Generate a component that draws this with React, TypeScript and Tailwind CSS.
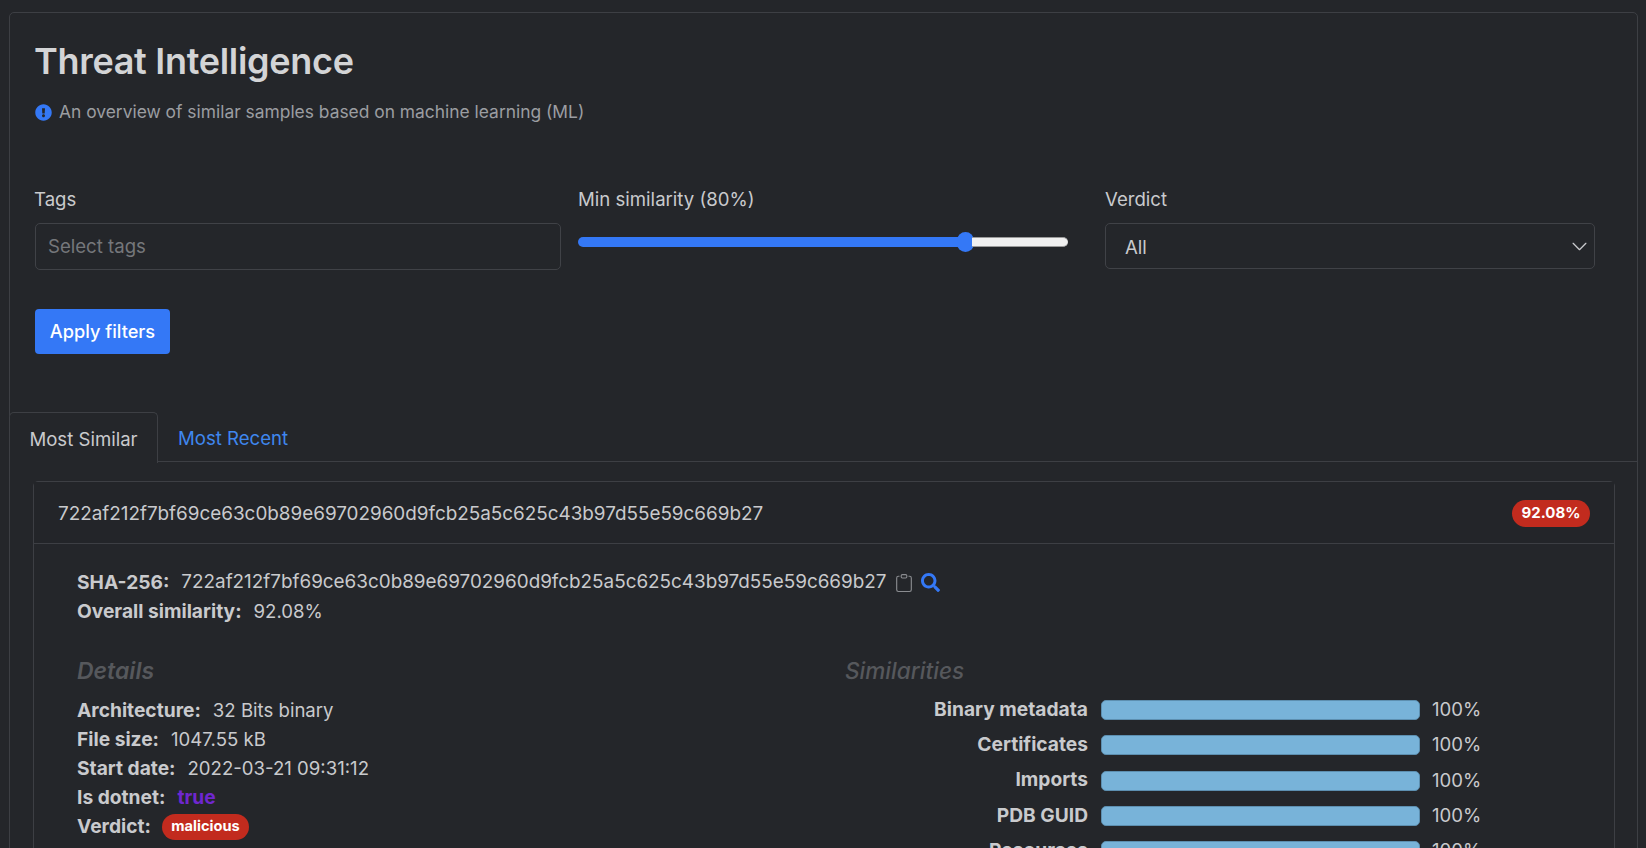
import { FaExclamationCircle, FaSearch } from 'react-icons/fa'
import { BsClipboard } from 'react-icons/bs'

const HASH = '722af212f7bf69ce63c0b89e69702960d9fcb25a5c625c43b97d55e59c669b27'

const similarities = ['Binary metadata', 'Certificates', 'Imports', 'PDB GUID', 'Resources']

const details = [
  { label: 'Architecture:', value: '32 Bits binary' },
  { label: 'File size:', value: '1047.55 kB' },
  { label: 'Start date:', value: '2022-03-21 09:31:12' },
]

const Field = ({ label, value }: { label: string; value: React.ReactNode }) => (
  <div className="flex h-[29px] items-center">
    <span className="text-[19.2px] font-bold">{label}</span>
    <span className="ml-[12px] flex items-center">{value}</span>
  </div>
)

const App = () => {
  return (
    <div className="h-[848px] overflow-hidden bg-[#24262a] pl-[9px] pr-[8px] pt-[12px] font-['Inter',sans-serif] text-[18.6px] text-[#c9cacd]">
      <div className="h-[900px] rounded-t-[5px] border border-[#3d3f44]">
        <div className="pl-[24px] pr-[25px] pt-[27px]">
          <h1 className="text-[36px] leading-[42px] font-semibold tracking-[-0.3px] text-[#d3d4d6]">Threat Intelligence</h1>
          <div className="mt-[18px] flex h-[25px] items-center text-[17.4px] text-[#9b9da1]">
            <FaExclamationCircle className="mr-[7px] ml-[1px] h-[17px] w-[17px] text-[#3478f6]" />
            An overview of similar samples based on machine learning (ML)
          </div>

          <div className="mt-[62px] flex">
            <div className="w-[527px]">
              <div className="h-[24px] leading-[24px]">Tags</div>
              <div className="mt-[12px] ml-[1px] flex h-[47px] items-center rounded-[5px] border border-[#404247] pl-[12px] pt-[1px] text-[#75777b]">
                Select tags
              </div>
            </div>
            <div className="ml-[17px] w-[490px]">
              <div className="h-[24px] leading-[24px]">Min similarity (80%)</div>
              <div className="mt-[21px] flex h-[20px] items-center">
                <div className="h-[10px] w-[381px] rounded-l-full bg-[#3478f6]" />
                <div className="-ml-[2px] h-[20px] w-[17px] shrink-0 rounded-full bg-[#3478f6]" />
                <div className="-ml-[2px] h-[10px] w-[96px] rounded-r-full border-y border-[#9a9a9a] bg-[#f0f0f0]" />
              </div>
            </div>
            <div className="ml-[37px] w-[490px]">
              <div className="h-[24px] leading-[24px]">Verdict</div>
              <div className="mt-[12px] flex h-[46px] items-center justify-between rounded-[5px] border border-[#404247] pl-[19px] pr-[6px]">
                <span className="pt-[3px]">All</span>
                <svg viewBox="0 0 16 16" className="h-[17px] w-[17px]" fill="none" stroke="#c9cacd" strokeWidth="1.2" strokeLinecap="round" strokeLinejoin="round">
                  <path d="m2 5 6 6 6-6" />
                </svg>
              </div>
            </div>
          </div>

          <button className="mt-[39px] ml-[1px] h-[45px] w-[135px] rounded-[4px] bg-[#3478f6] pt-[1px] text-center text-[18.2px] font-medium text-white">
            Apply filters
          </button>
        </div>

        <div className="mt-[58px] flex h-[50px] border-b border-[#3d3f44]">
          <div className="-ml-px flex h-[51px] w-[149px] items-center justify-center rounded-t-[5px] border border-b-0 border-[#3d3f44] bg-[#24262a] pt-[4px]">
            Most Similar
          </div>
          <div className="ml-[20px] flex items-center pt-[4px] text-[#3f87ee]">Most Recent</div>
        </div>

        <div className="ml-[23px] mr-[22px] mt-[19px] rounded-t-[5px] border border-[#3d3f44]">
          <div className="flex h-[62px] items-center justify-between border-b border-[#3d3f44] bg-[#232529] pl-[24px] pr-[24px]">
            <span className="pt-[3px] text-[18.87px]">{HASH}</span>
            <span className="mt-[1px] flex h-[27px] w-[78px] items-center justify-center rounded-full bg-[#c22b1e] text-[15px] font-bold text-white">
              92.08%
            </span>
          </div>
          <div className="pl-[43px] pr-[42px] pt-[24px]">
            <Field
              label="SHA-256:"
              value={
                <>
                  <span className="text-[18.87px]">{HASH}</span>
                  <BsClipboard className="ml-[8px] h-[18px] w-[18px] text-[#8a8c90]" />
                  <FaSearch className="ml-[8px] h-[19px] w-[19px] text-[#3478f6]" />
                </>
              }
            />
            <Field label="Overall similarity:" value="92.08%" />

            <div className="mt-[31px] grid grid-cols-[768px_1fr]">
              <div>
                <h2 className="h-[28px] text-[23px] leading-[28px] font-semibold text-[#56585c] italic">Details</h2>
                <div className="mt-[11px]">
                  {details.map((d) => (
                    <Field key={d.label} label={d.label} value={d.value} />
                  ))}
                  <Field label="Is dotnet:" value={<span className="text-[19.2px] font-bold text-[#6f27cf]">true</span>} />
                  <Field
                    label="Verdict:"
                    value={
                      <span className="-ml-[1px] flex h-[26px] w-[87px] items-center justify-center rounded-full bg-[#c22b1e] text-[14.6px] font-bold text-white">
                        malicious
                      </span>
                    }
                  />
                </div>
              </div>
              <div>
                <h2 className="h-[28px] text-[22.6px] leading-[28px] font-medium text-[#56585c] italic">Similarities</h2>
                <div className="mt-[15px] flex flex-col gap-[15.3px]">
                  {similarities.map((s) => (
                    <div key={s} className="flex h-[20px] items-center">
                      <span className="w-[243px] whitespace-nowrap pb-[2px] text-right text-[19.2px] font-bold">{s}</span>
                      <div className="ml-[13px] h-[20px] w-[319px] rounded-[5px] border border-[#5d8fb0] bg-[#78b3d9]" />
                      <span className="ml-[12px]">100%</span>
                    </div>
                  ))}
                </div>
              </div>
            </div>
          </div>
        </div>
      </div>
    </div>
  )
}

export default App
